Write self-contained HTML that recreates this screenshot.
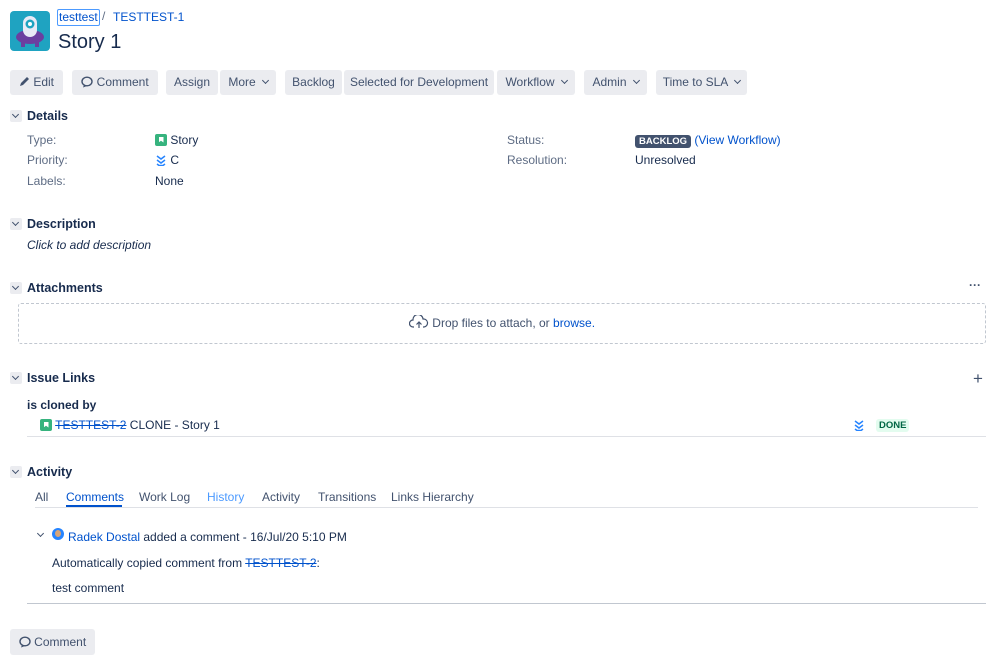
<!DOCTYPE html><html><head><style>
body{margin:0;width:998px;height:655px;background:#fff;font-family:"Liberation Sans",sans-serif;font-size:12px;color:#172b4d;position:relative;overflow:hidden}
.a{position:absolute;white-space:nowrap}
.btn{position:absolute;top:70px;height:25px;line-height:25px;background:#ebecf0;border-radius:3px;color:#42526e;font-size:12px;text-align:center}
.h{position:absolute;font-size:12.5px;font-weight:bold;color:#172b4d}
.chev{position:absolute;width:12px;height:12px;background:#ebecf0;border-radius:2px}
.chev:after{content:"";position:absolute;left:3px;top:2px;width:4px;height:4px;border-right:1.6px solid #42526e;border-bottom:1.6px solid #42526e;transform:rotate(45deg)}
.lbl{color:#5e6c84}
.lnk{color:#0052cc}
.dd:after{content:"";display:inline-block;width:4px;height:4px;border-right:1.5px solid #42526e;border-bottom:1.5px solid #42526e;transform:rotate(45deg);margin-left:7px;position:relative;top:-3px}
</style></head><body>
<div class="a" style="left:10px;top:11px;width:40px;height:40px;background:#1fa3c1;border-radius:4px;overflow:hidden">
<svg width="40" height="40"><ellipse cx="20" cy="26" rx="14" ry="7" fill="#6b3fa0"/><rect x="13" y="5" width="14" height="21" rx="7" fill="#e8eaf6"/><circle cx="20" cy="13" r="4.5" fill="#1fa3c1"/><circle cx="20" cy="13" r="2" fill="#fff"/><rect x="11" y="31" width="4" height="5" fill="#6b3fa0"/><rect x="25" y="31" width="4" height="5" fill="#6b3fa0"/></svg></div>
<div class="a lnk" style="left:57px;top:9px;border:1px solid #4c9aff;border-radius:2px;padding:0 1px;line-height:15px">testtest</div>
<div class="a" style="left:102px;top:9px;color:#5e6c84">/</div>
<div class="a lnk" style="left:113px;top:10px">TESTTEST-1</div>
<div class="a" style="left:58px;top:31px;font-size:20px">Story 1</div>
<div class="btn" style="left:10px;width:53px"><svg width="11" height="11" style="vertical-align:-1px"><path d="M1 10 L2 7 L8 1 L10 3 L4 9Z" fill="#42526e"/></svg> Edit</div>
<div class="btn" style="left:72px;width:86px"><svg width="12" height="12" style="vertical-align:-2px"><ellipse cx="6" cy="5.5" rx="5" ry="4.3" fill="none" stroke="#42526e" stroke-width="1.4"/><path d="M3 9 L2 11.5 L6 10" fill="#42526e"/></svg> Comment</div>
<div class="btn" style="left:166px;width:52px">Assign</div>
<div class="btn dd" style="left:220px;width:56px">More</div>
<div class="btn" style="left:285px;width:57px">Backlog</div>
<div class="btn" style="left:344px;width:150px">Selected for Development</div>
<div class="btn dd" style="left:497px;width:78px">Workflow</div>
<div class="btn dd" style="left:584px;width:63px">Admin</div>
<div class="btn dd" style="left:656px;width:91px">Time to SLA</div>

<div class="chev" style="left:10px;top:110px"></div><div class="h" style="left:27px;top:109px">Details</div>
<div class="a lbl" style="left:27px;top:133px">Type:</div>
<div class="a" style="left:155px;top:133px"><span style="display:inline-block;width:12px;height:12px;background:#36b37e;border-radius:2px;vertical-align:-2px;position:relative"><span style="position:absolute;left:3.5px;top:2.5px;width:5px;height:6px;background:#fff;clip-path:polygon(0 0,100% 0,100% 100%,50% 70%,0 100%)"></span></span> Story</div>
<div class="a lbl" style="left:27px;top:153px">Priority:</div>
<div class="a" style="left:155px;top:153px"><svg width="12" height="12" style="vertical-align:-2px"><path d="M2 2l4 3 4-3M2 6l4 3 4-3M2 10l2 1.5h4l2-1.5" stroke="#2684ff" stroke-width="1.5" fill="none"/></svg> C</div>
<div class="a lbl" style="left:27px;top:174px">Labels:</div>
<div class="a" style="left:155px;top:174px">None</div>
<div class="a lbl" style="left:507px;top:133px">Status:</div>
<div class="a" style="left:635px;top:133px"><span style="background:#42526e;color:#fff;font-size:9.5px;font-weight:bold;padding:1px 4px;border-radius:3px">BACKLOG</span> <span class="lnk">(View Workflow)</span></div>
<div class="a lbl" style="left:507px;top:153px">Resolution:</div>
<div class="a" style="left:635px;top:153px">Unresolved</div>

<div class="chev" style="left:10px;top:218px"></div><div class="h" style="left:27px;top:217px">Description</div>
<div class="a" style="left:27px;top:238px;font-style:italic">Click to add description</div>

<div class="chev" style="left:10px;top:282px"></div><div class="h" style="left:27px;top:281px">Attachments</div>
<div class="a" style="left:969px;top:278px;font-weight:bold;color:#42526e">···</div>
<div class="a" style="left:18px;top:303px;width:966px;height:39px;border:1px dashed #c1c7d0;border-radius:3px;text-align:center;line-height:39px;color:#42526e"><svg width="20" height="14" style="vertical-align:-2px"><path d="M5 12H4a3.5 3.5 0 0 1 0-7 5 5 0 0 1 10-1 4 4 0 0 1 1 8h-1M10 13V7M7.5 9.5 10 7l2.5 2.5" stroke="#42526e" stroke-width="1.2" fill="none"/></svg> Drop files to attach, or <span class="lnk">browse.</span></div>

<div class="chev" style="left:10px;top:372px"></div><div class="h" style="left:27px;top:371px">Issue Links</div>
<div class="a" style="left:973px;top:369px;font-size:17px;color:#42526e">+</div>
<div class="a" style="left:27px;top:398px;font-weight:bold">is cloned by</div>
<div class="a" style="left:40px;top:418px"><span style="display:inline-block;width:12px;height:12px;background:#36b37e;border-radius:2px;vertical-align:-2px;position:relative"><span style="position:absolute;left:3.5px;top:2.5px;width:5px;height:6px;background:#fff;clip-path:polygon(0 0,100% 0,100% 100%,50% 70%,0 100%)"></span></span> <span class="lnk" style="text-decoration:line-through">TESTTEST-2</span> CLONE - Story 1</div>
<div class="a" style="left:853px;top:419px"><svg width="12" height="12"><path d="M2 2l4 3 4-3M2 6l4 3 4-3M2 10l2 1.5h4l2-1.5" stroke="#2684ff" stroke-width="1.5" fill="none"/></svg></div>
<div class="a" style="left:876px;top:419px;background:#e3fcef;color:#006644;font-size:9.5px;font-weight:bold;padding:1px 3px;border-radius:3px">DONE</div>
<div class="a" style="left:27px;top:436px;width:959px;height:1px;background:#dfe1e6"></div>

<div class="chev" style="left:10px;top:466px"></div><div class="h" style="left:27px;top:465px">Activity</div>
<div class="a" style="left:35px;top:490px;color:#42526e">All</div>
<div class="a" style="left:66px;top:490px;color:#0052cc">Comments</div>
<div class="a" style="left:66px;top:505px;width:56px;height:2px;background:#0052cc"></div>
<div class="a" style="left:139px;top:490px;color:#42526e">Work Log</div>
<div class="a" style="left:207px;top:490px;color:#4c9aff">History</div>
<div class="a" style="left:262px;top:490px;color:#42526e">Activity</div>
<div class="a" style="left:318px;top:490px;color:#42526e">Transitions</div>
<div class="a" style="left:391px;top:490px;color:#42526e">Links Hierarchy</div>
<div class="a" style="left:35px;top:507px;width:943px;height:1px;background:#dfe1e6"></div>
<div class="a" style="left:38px;top:531px;width:4px;height:4px;border-right:1.5px solid #42526e;border-bottom:1.5px solid #42526e;transform:rotate(45deg)"></div>
<div class="a" style="left:52px;top:528px;width:12px;height:12px;border-radius:50%;background:#2684ff;overflow:hidden"><div style="margin:2px 0 0 3px;width:6px;height:7px;border-radius:50%;background:#d7a57a"></div></div>
<div class="a" style="left:68px;top:530px"><span class="lnk">Radek Dostal</span> added a comment - 16/Jul/20 5:10 PM</div>
<div class="a" style="left:52px;top:556px">Automatically copied comment from <span class="lnk" style="text-decoration:line-through">TESTTEST-2</span>:</div>
<div class="a" style="left:52px;top:581px">test comment</div>
<div class="a" style="left:27px;top:603px;width:959px;height:1px;background:#c1c7d0"></div>
<div class="btn" style="left:10px;top:629px;width:85px;height:26px;line-height:26px"><svg width="12" height="12" style="vertical-align:-2px"><ellipse cx="6" cy="5.5" rx="5" ry="4.3" fill="none" stroke="#42526e" stroke-width="1.4"/><path d="M3 9 L2 11.5 L6 10" fill="#42526e"/></svg> Comment</div>
</body></html>
